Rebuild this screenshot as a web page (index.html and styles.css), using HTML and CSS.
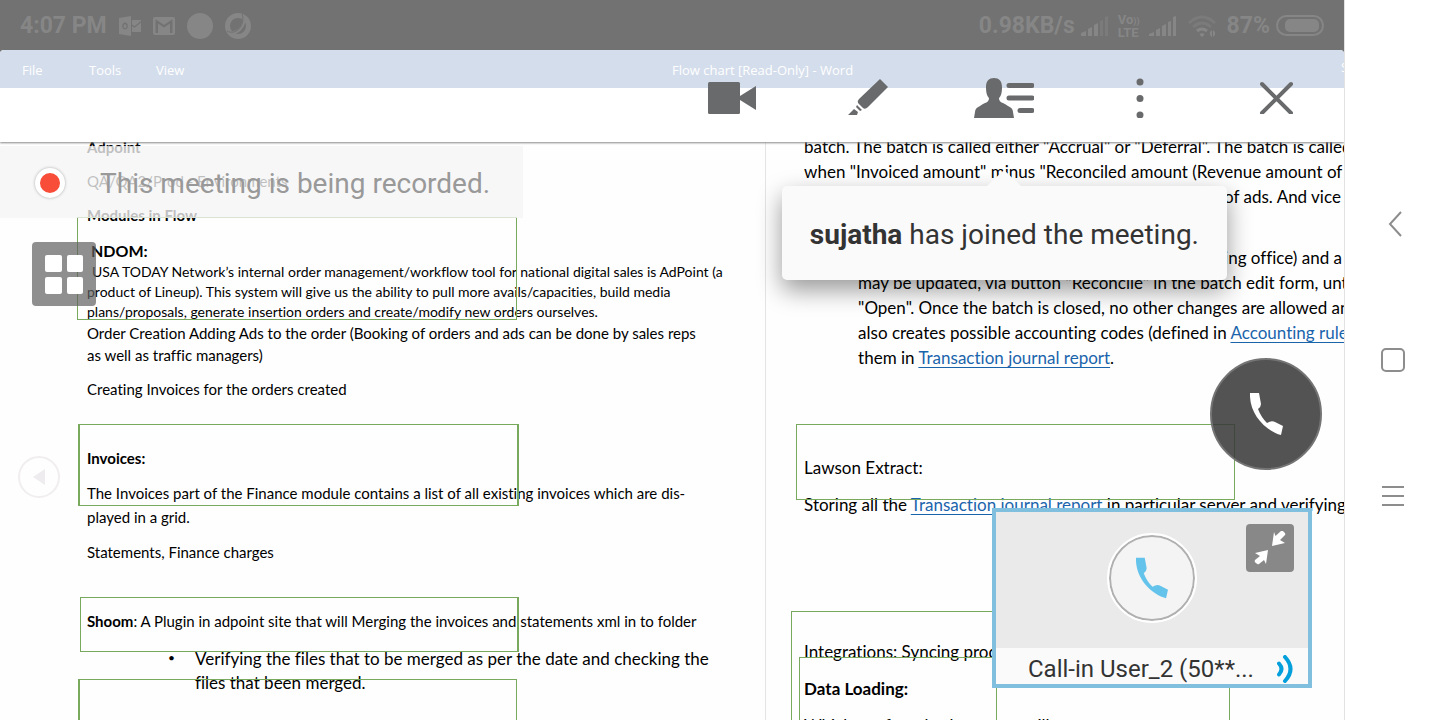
FILE: index.html
```html
<!DOCTYPE html>
<html lang="en">
<head>
<meta charset="utf-8">
<title>Meeting</title>
<link rel="stylesheet" href="styles.css">
</head>
<body>
<div class="phone">
  <main class="screen">
    <header class="status">
      <div class="status-group">
        <span>4:07 PM</span>
        <svg width="22" height="20" viewBox="0 0 22 20"><path fill="currentColor" fill-rule="evenodd" d="M0 2 12 0V20L0 18ZM6 6.500a2.800 3.500 0 1 0 .01 0ZM6 8.200a1.500 2 0 1 1-.01 0Z"/><path fill="currentColor" d="M13 4h9v1l-6.500 5.300-2.500-1.700ZM13 10l2.500 1.700L22 6.500V16h-9Z"/></svg>
        <svg width="22" height="18" viewBox="0 0 22 18"><path fill="currentColor" fill-rule="evenodd" d="M2 0H20a2 2 0 0 1 2 2V16a2 2 0 0 1-2 2H2a2 2 0 0 1-2-2V2a2 2 0 0 1 2-2ZM2.500 2.500V16H5V6.500L11 10.500 17 6.500V16h2.500V2.500H19L11 8 3 2.500Z"/></svg>
        <svg width="26" height="26" viewBox="0 0 26 26"><circle cx="13" cy="13" r="13" fill="currentColor"/></svg>
        <svg width="26" height="26" viewBox="0 0 26 26"><circle cx="13" cy="13" r="10.500" fill="none" stroke="currentColor" stroke-width="5"/><path d="M4 19C12 22 20 14 19 3" fill="none" stroke="currentColor" stroke-width="3"/><path d="M2 18C11 23 21 12 17 1" fill="none" stroke="#727272"/></svg>
      </div>
      <div class="status-group status-right">
        <span>0.98KB/s</span>
        <svg width="28" height="20" viewBox="0 0 28 20"><path fill="currentColor" d="M0 17 5 15v5H0ZM7 13l4-2v9H7ZM13 9l4-2v13h-4Z"/><path fill="#7b7b7b" d="M19 5l3-1v16h-3ZM24 1l3-1v20h-3Z"/></svg>
        <span class="volte"><span>Vo<small>))</small></span><span>LTE</span></span>
        <svg width="28" height="20" viewBox="0 0 28 20"><path fill="currentColor" d="M0 18 5 16v4H0ZM7 14l4-2v8H7ZM13 10l4-2v12h-4ZM19 6l3-1v15h-3ZM24 1l3-1v20h-3Z"/></svg>
        <svg class="wifi" width="28" height="22" viewBox="0 0 28 22"><g fill="none" stroke-width="3"><path stroke="#7b7b7b" d="M1 8Q14-4 27 8M5 12Q14 4 23 12"/><path stroke="currentColor" d="M9 16Q14 12 19 16"/></g><path fill="currentColor" d="M11.500 19.500a3 3 0 0 1 5 0L14 22ZM22 17l2-2v7l-2-2ZM25 15v7l2-2v-3Z"/></svg>
        <span>87%</span>
        <svg width="48" height="21" viewBox="0 0 48 21"><rect x="1" y="1" width="46" height="19" rx="9.500" fill="none" stroke="currentColor" stroke-width="2"/><rect x="9" y="4" width="34" height="13" rx="5" fill="currentColor"/></svg>
      </div>
    </header>

    <div class="share">
      <div class="menubar">
        <a href="#">File</a><a href="#">Tools</a><a href="#">View</a>
        <span class="doc-title">Flow chart [Read-Only] - Word</span>
        <span class="doc-user">S</span>
      </div>

      <div class="pages">
        <article class="page page-left">
          <p class="gap-m"><b>Adpoint</b></p>
          <p class="gap-m">QA/QA2/Prod - Environments</p>
          <p class="gap-m"><b>Modules in Flow</b></p>
          <h2>NDOM:</h2>
          <p class="small"><span class="lead">USA TODAY Network’s internal order management/workflow tool for national digital sales is AdPoint (a</span><br>product of Lineup). This system will give us the ability to pull more avails/capacities, build media<br>plans/proposals, generate insertion orders and create/modify new orders ourselves.</p>
          <p class="gap-m">Order Creation Adding Ads to the order (Booking of orders and ads can be done by sales reps<br>as well as traffic managers)</p>
          <p class="gap-xl">Creating Invoices for the orders created</p>
          <p class="gap-m"><b>Invoices:</b></p>
          <p class="tall gap-m">The Invoices part of the Finance module contains a list of all existing invoices which are dis-<br>played in a grid.</p>
          <p class="gap-xl">Statements, Finance charges</p>
          <p class="gap-l"><b>Shoom</b>: A Plugin in adpoint site that will Merging the invoices and statements xml in to folder</p>
          <ul class="tall large"><li><span>Verifying the files that to be merged as per the date and checking the<br>files that been merged.</span></li></ul>
          <i class="box box-ndom"></i><i class="box box-invoices"></i><i class="box box-shoom"></i><i class="box box-next"></i>
        </article>
        <article class="page page-right">
          <p class="large">batch. The batch is called either "Accrual" or "Deferral". The batch is called<br>when "Invoiced amount" minus "Reconciled amount (Revenue amount of a<br><span class="tail">of ads. And vice v</span></p>
          <p class="large indent"><span class="tail">ing office) and a</span><br>may be updated, via button "Reconcile" in the batch edit form, unt<br>"Open". Once the batch is closed, no other changes are allowed an<br>also creates possible accounting codes (defined in <a href="#">Accounting rules</a><br>them in <a href="#">Transaction journal report</a>.</p>
          <p class="large gap-m">Lawson Extract:</p>
          <p class="large storing">Storing all the <a href="#">Transaction journal report</a> in particular server and verifying</p>
          <p class="large gap-m">Integrations: Syncing products</p>
          <p class="large gap-m"><b>Data Loading:</b></p>
          <p class="large">Which are from both sources will</p>
          <i class="box box-lawson"></i><i class="box box-integrations"></i><i class="box box-loading"></i>
        </article>
      </div>

      <nav class="toolbar" aria-label="Meeting">
        <button aria-label="Video"><svg width="48" height="32" viewBox="0 0 48 32"><rect width="32" height="32" rx="1.500"/><path d="M32 14 48 4V28L32 18Z"/></svg></button>
        <button aria-label="Annotate"><svg width="40" height="37" viewBox="0 0 40 37"><path d="M32 0 40 8 20 28q-3 3-5 1l-5-5q-1-2 1-4ZM9 26l5 5-2 1-4-4ZM6 30l4 3-1 3H0Z"/></svg></button>
        <button aria-label="Participants"><svg width="60" height="40" viewBox="0 0 60 40"><path d="M12 9C12 3 15 0 20 0s8 3 8 9c0 6-1 9-3 11 0 5 4 4 9 8q5 2 5 6l1 6H0l1-6q0-4 5-6c5-4 9-3 9-8-2-2-3-5-3-11Z"/><path d="M35 7.500H58M35 20H58M46 32.500H58" stroke="#696a6c" stroke-width="5" stroke-linecap="round"/></svg></button>
        <button aria-label="More"><svg width="8" height="40" viewBox="0 0 8 40"><circle cx="4" cy="4" r="3.500"/><circle cx="4" cy="20.500" r="3.500"/><circle cx="4" cy="37" r="3.500"/></svg></button>
        <button aria-label="Close"><svg width="33" height="33" viewBox="0 0 33 33"><path d="M2 3 31 32M31 3 2 32" stroke="#696a6c" stroke-width="4" stroke-linecap="round"/></svg></button>
      </nav>

      <div class="recording"><i class="dot"></i><span>This meeting is being recorded.</span></div>
      <button class="grid-btn" aria-label="Layout"><i></i><i></i><i></i><i></i></button>
      <button class="prev" aria-label="Previous"><svg width="12" height="16" viewBox="0 0 12 16"><path fill="#eeecee" d="M12 0V16L0 8Z"/></svg></button>
      <div class="toast" role="status"><b>sujatha</b> has joined the meeting.</div>
      <button class="call" aria-label="Call"><svg width="33" height="42" viewBox="0 0 33 42"><path fill="#fff" d="M0 0H9L11 11Q11 14 8 16 11 24 17 30 22 27 25 29L33 33 31 42C14 37-1 20 0 0Z"/></svg></button>
      <section class="participant">
        <div class="stage">
          <span class="avatar"><svg width="32" height="42" viewBox="0 0 33 42"><path fill="#64c3ea" d="M0 0H9L11 11Q11 14 8 16 11 24 17 30 22 27 25 29L33 33 31 42C14 37-1 20 0 0Z"/></svg></span>
          <button class="shrink" aria-label="Shrink"><svg width="32" height="34" viewBox="0 0 32 34"><path fill="#fff" d="M20 1 21.500 5 27 0q1-1 3 1 2 2 1 3L26 9l5 3-13 3ZM1 22 14 19 12 33 10 29 5 33q-1 1-3-1-2-1-1-3l5-4Z"/></svg></button>
        </div>
        <div class="caption"><span>Call-in User_2 (50**...</span><svg width="16" height="28" viewBox="0 0 16 28"><path d="M2 8.500Q7 14 2 19.500M8 2Q19 14 8 26" fill="none" stroke="#05a0dc" stroke-width="4" stroke-linecap="round"/></svg></div>
      </section>
    </div>
  </main>
  <nav class="sysnav" aria-label="System">
    <button aria-label="Back"><svg width="18" height="26" viewBox="-4 0 18 26"><path d="M13 1 2 13 13 25"/></svg></button>
    <button aria-label="Home"><svg width="24" height="24" viewBox="0 0 24 24"><rect x="1" y="1" width="22" height="22" rx="4"/></svg></button>
    <button aria-label="Menu"><svg width="22" height="22" viewBox="0 0 22 22"><path d="M0 2H22M0 11H22M0 20H22"/></svg></button>
  </nav>
</div>
</body>
</html>
```
FILE: styles.css
```css
* { box-sizing: border-box; }
body { margin: 0; background: #fff; font-family: Lato, Carlito, sans-serif; color: #000; }
button { border: 0; padding: 0; background: none; display: grid; place-items: center; }
svg { display: block; flex: none; }
p, h2, ul { margin: 0; padding: 0; }
.phone { display: flex; height: 100vh; overflow: hidden; }
.screen { flex: 1; min-width: 0; display: flex; flex-direction: column; background: #727272; border-right: 1px solid #e2e2e2; }

.status { height: 50px; flex: none; display: flex; justify-content: space-between; align-items: center; padding: 1px 20px 0; color: #868686; font: bold 23px Roboto, sans-serif; }
.status-group { display: flex; align-items: center; gap: 12px; }
.status-right { gap: 6px; }
.volte { display: flex; flex-direction: column; font-size: 13px; line-height: 11px; padding: 0 3px; }
.volte small { font-size: 9px; }
.wifi { margin: 0 5px; }

.share { position: relative; flex: 1; min-height: 0; overflow: hidden; background: #fefefe; border-radius: 4px 4px 0 0; }
.menubar { position: relative; height: 38px; display: flex; align-items: center; padding: 2px 22px 0; background: #d4ddeb; color: #fff; font: 13px "Open Sans", sans-serif; }
.menubar a { width: 67px; color: #fff; text-decoration: none; }
.doc-title { position: absolute; left: 50%; }
.doc-user { position: absolute; left: calc(100% - 3px); top: 8px; }
.pages { display: flex; }
.page { position: relative; padding-top: 48px; font-size: 15px; line-height: 22px; white-space: nowrap; height: 632px; font-variant-ligatures: none; }
.page-left { width: 57%; padding-left: 87px; border-right: 1px solid #e4e4e4; }
.page-right { flex: 1; padding: 46px 0 0 38px; overflow: hidden; }
.gap-m { margin-bottom: 12px; }
.gap-l { margin-bottom: 15px; }
.gap-xl { margin-bottom: 47px; }
h2 { font-size: 16px; line-height: 22px; padding: 2px 0 0 4px; }
.small { font-size: 14px; line-height: 20px; }
.lead { padding-left: 5px; }
.tall { line-height: 24px; }
.large { font-size: 17px; }
.page-right .large { line-height: 25px; }
.page-left ul { padding-left: 81px; list-style: none; }
.page-left li { display: flex; }
.page-left li::before { content: "•"; width: 27px; font-size: 12px; line-height: 22px; }
.indent { padding-left: 54px; margin: 36px 0 85px; }
.tail { display: inline-block; padding-left: 420px; }
.indent .tail { padding-left: 366px; }
.storing { margin-bottom: 122px; }
.page a { color: #1a64ac; text-underline-offset: 3px; }

.box { position: absolute; border: 1px solid #78a95c; }
.box-ndom { left: 77px; top: 129px; width: 440px; height: 103px; }
.box-invoices { left: 78px; top: 336px; width: 441px; height: 82px; border-width: 1px 2px; }
.box-shoom { left: 80px; top: 509px; width: 439px; height: 55px; border-right-width: 2px; }
.box-next { left: 78px; top: 591px; width: 439px; height: 60px; border-left-width: 2px; }
.box-lawson { left: 30px; top: 336px; width: 439px; height: 76px; }
.box-integrations { left: 25px; top: 523px; width: 439px; height: 140px; }
.box-loading { left: 33px; top: 569px; width: 198px; height: 90px; }

.toolbar { position: absolute; inset: 0 0 auto 0; height: 92px; padding-top: 3px; display: grid; grid-template-columns: repeat(5, 136px); justify-content: end; align-items: center; background: linear-gradient(transparent 38px, #fff 38px); box-shadow: 0 1px 2px #888; fill: #696a6c; }
.recording { position: absolute; left: 0; top: 96px; width: 523px; height: 72px; padding: 2px 0 0 35px; display: flex; align-items: center; gap: 35px; background: rgba(245,245,245,.78); color: #999; font: 28px Roboto, sans-serif; }
.dot { width: 30px; height: 30px; border: 5px solid #fff; border-radius: 50%; background: #f84d38; box-shadow: 0 0 3px #aaa; }
.grid-btn { position: absolute; left: 32px; top: 192px; width: 64px; height: 64px; padding: 13px; grid-template-columns: 1fr 1fr; gap: 5px; border-radius: 4px; background: rgba(95,95,95,.7); place-items: stretch; }
.grid-btn i { height: 17px; background: #fff; border-radius: 2px; }
.prev { position: absolute; left: 18px; top: 406px; width: 42px; height: 42px; border: 2px solid #f1eeef; border-radius: 50%; }
.toast { position: absolute; right: 117px; top: 136px; padding: 30px 28px 26px; border-radius: 5px; background: #fafafa; color: #333; font: 28px/38px Roboto, sans-serif; box-shadow: 0 10px 24px rgba(0,0,0,.4); white-space: nowrap; }
.toast::before { content: ""; position: absolute; left: 50%; top: -16px; margin-left: -17px; border: solid transparent; border-width: 0 17px 16px; border-bottom-color: #fafafa; }
.call { position: absolute; right: 22px; top: 308px; width: 112px; height: 112px; border: 2px solid #747474; border-radius: 50%; background: rgba(55,55,55,.86); }
.participant { position: absolute; right: 32px; bottom: 32px; width: 320px; height: 180px; border: 4px solid #80bfdd; display: flex; flex-direction: column; background: #fafafa; }
.stage { flex: 1; display: grid; place-items: center; background: #eaeaea; padding-bottom: 4px; }
.avatar { width: 86px; height: 86px; display: grid; place-items: center; background: #f4f4f4; border: 2px solid #b0b0b0; outline: 2px solid #fff; border-radius: 50%; }
.shrink { position: absolute; right: 14px; top: 12px; width: 48px; height: 48px; border-radius: 4px; background: #888; }
.caption { height: 36px; padding: 5px 15px 0 32px; display: flex; justify-content: space-between; align-items: center; color: #333; font: 24px Roboto, sans-serif; }

.sysnav { width: 95px; flex: none; display: grid; grid-template-rows: repeat(3, 136px); place-content: center; place-items: center; background: #fff; }
.sysnav svg { fill: none; stroke: #8d8d8d; stroke-width: 2; }
```
